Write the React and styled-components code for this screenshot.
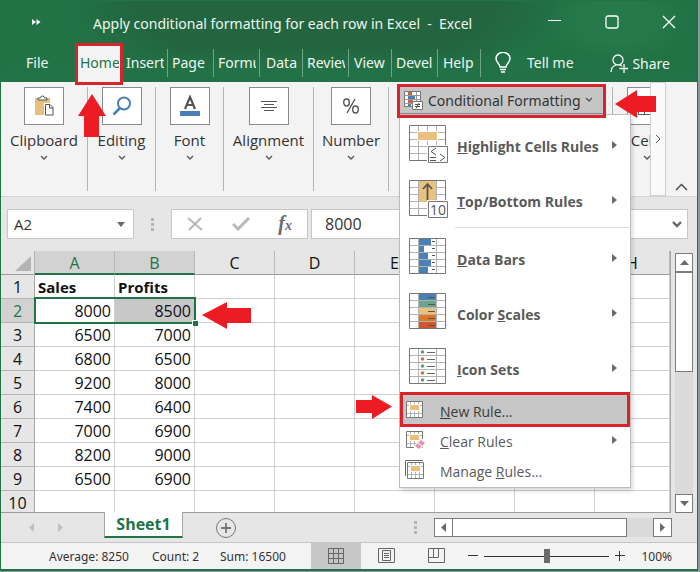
import React from "react";
import styled, { createGlobalStyle, css } from "styled-components";

const RED = "#d9242c";
const ARROW = "#ed1c24";
const GREEN = "#217346";

const GlobalStyle = createGlobalStyle`
  *, *::before, *::after { box-sizing: border-box; }
  body { margin: 0; background: #8d9a9f; font-family: "Noto Sans", "Open Sans", sans-serif; }
  button, input { font: inherit; color: inherit; background: none; border: 0; padding: 0; margin: 0; }
  svg { display: block; flex: none; }
`;

const Window = styled.main`
  position: relative;
  margin-right: 2px;
  border: 1px solid ${GREEN};
  border-bottom-width: 2px;
  background: #e6e6e6;
  color: #333;
  font-size: 14px;
`;

/* ---------- header ---------- */

const Header = styled.header`
  background:
    radial-gradient(ellipse 30px 18px at 855px 46px, #1f6640 80%, transparent),
    radial-gradient(ellipse 70px 40px at 617px 20px, #26794a 50%, transparent),
    radial-gradient(ellipse 420px 50px at 330px 96px, #237247 60%, transparent 100%),
    radial-gradient(ellipse 250px 80px at 315px 10px, #23653f 70%, transparent),
    ${GREEN};
  color: #eef6f0;
`;

const TitleBar = styled.div`
  display: flex;
  align-items: center;
  height: 42px;
  padding-left: 31px;
`;

const TitleText = styled.h1`
  flex: 1;
  margin: 4px 0 0 52px;
  font-size: 14px;
  line-height: 20px;
  font-weight: 400;
  white-space: pre;
`;

const WindowButton = styled.button`
  display: grid;
  place-items: center;
  width: 57px;
  height: 36px;
`;

const TabBar = styled.nav`
  display: flex;
  height: 39px;
`;

const Tab = styled.button`
  position: relative;
  display: flex;
  align-items: center;
  width: ${(p) => p.$width}px;
  padding: 0 4px 1px ${(p) => p.$pad ?? 4}px;
  text-align: left;
  ${(p) => p.$active && css`background: #f3f3f3; color: ${GREEN};`}
  ${(p) => p.$divided && css`
    &::after {
      content: "";
      position: absolute;
      right: 0;
      top: 6px;
      bottom: 5px;
      width: 1px;
      background: #6fa486;
    }
  `}
`;

const Clip = styled.span`
  flex: 1;
  overflow: hidden;
  white-space: nowrap;
`;

const TabAction = styled.button`
  display: flex;
  align-items: center;
  gap: ${(p) => p.$gap}px;
  padding: ${(p) => p.$top ?? 0}px 0 0 14px;
  margin-left: ${(p) => (p.$end ? "auto" : 0)};
  margin-right: ${(p) => (p.$end ? 27 : 0)}px;
  white-space: nowrap;
`;

const Frame = styled.span`
  position: absolute;
  z-index: 4;
  inset: ${(p) => p.$inset};
  border: 3px solid ${RED};
  pointer-events: none;
`;

/* ---------- ribbon ---------- */

const Ribbon = styled.section`
  display: flex;
  align-items: flex-start;
  height: 115px;
  background: #f3f3f3;
  border-bottom: 1px solid #d2d2d2;
`;

const Group = styled.button`
  display: flex;
  flex-direction: column;
  align-items: center;
  flex: none;
  width: ${(p) => p.$width}px;
  height: 104px;
  margin-top: 5px;
  border-right: ${(p) => (p.$open ? 0 : 1)}px solid #b4b4b4;
  font-family: "Open Sans", sans-serif;
  font-size: 15px;
  line-height: 20px;
  white-space: nowrap;
`;

const GroupIcon = styled.span`
  display: grid;
  place-items: center;
  width: 40px;
  height: 38px;
  margin-bottom: 5px;
  border: 1px solid #8a8a8a;
  background: #fff;
`;

const StyleGroup = styled.div`
  flex: 1;
  height: 104px;
  margin-top: 5px;
  padding-left: 11px;
  border-right: 1px solid #b4b4b4;
`;

const MenuAnchor = styled.div`
  position: relative;
  width: 205px;
`;

const CfButton = styled.button`
  display: flex;
  align-items: center;
  width: 205px;
  height: 27px;
  padding: 0 0 0 4px;
  gap: 4px;
  background: #c5c5c5;
  border-bottom: 1px solid #888;
  white-space: nowrap;
`;

const CellsClip = styled.div`
  width: 37px;
  padding-left: 14px;
  overflow: hidden;
`;

const ScrollRight = styled.button`
  display: grid;
  place-items: center;
  width: 16px;
  height: 114px;
  border: 1px solid #d0d0d0;
  background: #fafafa;
`;

const Collapse = styled.button`
  align-self: flex-end;
  width: 31px;
  display: grid;
  place-items: center;
  height: 18px;
`;

/* ---------- menu ---------- */

const Menu = styled.div`
  position: absolute;
  z-index: 3;
  left: -1px;
  top: 27px;
  width: 232px;
  padding: 2px 0;
  border: 1px solid #bdbdbd;
  background: #fff;
  box-shadow: 2px 3px 4px rgba(0, 0, 0, 0.14);
  color: #5a5a5a;
`;

const BigItem = styled.button`
  display: flex;
  align-items: center;
  width: 100%;
  height: 55px;
  padding: 0 13px 0 9px;
  font-weight: 700;
  text-align: left;
`;

const BigLabel = styled.span`
  flex: 1;
  margin-left: 8px;
  padding-top: 4px;
  font-family: "Open Sans", sans-serif;
  white-space: nowrap;
`;

const SmallItem = styled.button`
  position: relative;
  display: flex;
  align-items: center;
  width: 100%;
  height: 30px;
  padding: 0 13px 0 5px;
  text-align: left;
  ${(p) => p.$active && css`background: #c6c6c6; color: #3a3a3a;`}
`;

const SmallLabel = styled.span`
  flex: 1;
  margin-left: 15px;
  padding-top: 2px;
  font-family: "Open Sans", sans-serif;
`;

const Rule = styled.hr`
  height: 1px;
  margin: 0 1px 2px 55px;
  border: 0;
  background: #dcdcdc;
`;

/* ---------- formula bar ---------- */

const FormulaBar = styled.div`
  display: flex;
  align-items: center;
  height: 54px;
  padding: 0 9px 0 6px;
  font-size: 16px;
`;

const NameBox = styled.div`
  display: flex;
  align-items: center;
  width: 127px;
  height: 30px;
  padding: 0 8px 0 6px;
  border: 1px solid #c6c6c6;
  background: #fff;
`;

const BareInput = styled.input`
  flex: 1;
  min-width: 0;
  width: 100%;
  outline: none;
  font-family: "Open Sans", sans-serif;
  font-size: ${(p) => p.$size ?? 16}px;
`;

const Grip = styled.span`
  width: 3px;
  height: 13px;
  margin: 0 17px;
  align-self: center;
  background: repeating-linear-gradient(#b4b4b4 0 3px, transparent 3px 5px);
`;

const FxBox = styled.div`
  display: flex;
  align-items: center;
  justify-content: space-between;
  width: 137px;
  height: 30px;
  padding: 0 15px;
  border: 1px solid #c6c6c6;
  background: #fff;
`;

const FxButton = styled.button`
  font-family: "Liberation Serif", serif;
  font-style: italic;
  font-weight: 700;
  font-size: 20px;
  line-height: 24px;
  color: #6a6a6a;
  small { font-size: 14px; }
`;

const ValueBox = styled.div`
  display: flex;
  align-items: center;
  flex: 1;
  height: 30px;
  margin-left: 3px;
  padding: 0 5px 0 13px;
  border: 1px solid #c6c6c6;
  background: #fff;
`;

/* ---------- grid ---------- */

const SheetArea = styled.section`
  display: flex;
  height: 262px;
`;

const GridClip = styled.div`
  flex: 1;
  overflow: hidden;
  border-right: 1px solid #a6a6a6;
  border-bottom: 1px solid #9c9c9c;
`;

const Grid = styled.table`
  width: 100%;
  table-layout: fixed;
  border-collapse: separate;
  border-spacing: 0;
  color: #111;
  font-family: "Open Sans", sans-serif;
  font-size: 16px;
  line-height: 20px;
`;

const ColHead = styled.th`
  width: ${(p) => (p.$wide ? "auto" : "80px")};
  height: 24px;
  padding: 1px 0 0;
  border-right: 1px solid #b8b8b8;
  border-bottom: 1px solid #9c9c9c;
  background: #e6e6e6;
  font-weight: 400;
  ${(p) => p.$active && css`
    background: #d2d2d2;
    color: ${GREEN};
    border-bottom: 2px solid ${GREEN};
  `}
`;

const Corner = styled.th`
  width: 34px;
  padding: 0 3px 3px 0;
  border-right: 1px solid #b0b0b0;
  border-bottom: 1px solid #9c9c9c;
  vertical-align: bottom;
  svg { margin-left: auto; }
`;

const RowHead = styled.th`
  height: 24px;
  padding: 1px 0 0;
  border-right: 1px solid #a6a6a6;
  border-bottom: 1px solid #b4b4b4;
  background: #e6e6e6;
  font-weight: 400;
  ${(p) => p.$active && css`background: #d2d2d2; color: ${GREEN};`}
`;

const Cell = styled.td`
  position: relative;
  height: 24px;
  padding: 1px 3px 0;
  border-right: 1px solid #d0d0d0;
  border-bottom: 1px solid #d0d0d0;
  background: ${(p) => (p.$shaded ? "#c8c8c8" : "#fff")};
  font-weight: ${(p) => (p.$bold ? 700 : 400)};
  font-size: ${(p) => (p.$bold ? 15 : 16)}px;
  text-align: ${(p) => (p.$bold ? "left" : "right")};
`;

const Selection = styled.span`
  position: absolute;
  z-index: 1;
  left: -1px;
  top: -2px;
  width: 162px;
  height: 27px;
  border: 2px solid ${GREEN};
  &::after {
    content: "";
    position: absolute;
    right: -4px;
    bottom: -4px;
    width: 6px;
    height: 6px;
    border: 1px solid #fff;
    border-width: 1px 0 0 1px;
    background: ${GREEN};
  }
`;

const ScrollColumn = styled.div`
  display: flex;
  flex-direction: column;
  width: 18px;
  margin: 2px 4px 0;
  background: #dadada;
`;

const ScrollButton = styled.button`
  display: grid;
  place-items: center;
  width: ${(p) => p.$size ?? 18}px;
  height: 19px;
  border: 1px solid #7c7c7c;
  background: #fff;
`;

const ThumbV = styled.div`
  height: 100px;
  margin-bottom: auto;
  border: 1px solid #7c7c7c;
  background: #fff;
`;

/* ---------- footer ---------- */

const SheetTabs = styled.div`
  display: flex;
  height: 30px;
  border-bottom: 1px solid #c6c6c6;
`;

const Nav = styled.div`
  display: flex;
  align-items: center;
  gap: 24px;
  width: 103px;
  padding-left: 28px;
`;

const SheetTab = styled.button`
  width: 79px;
  height: 26px;
  margin-top: -1px;
  border: 1px solid #a6a6a6;
  border-top: 0;
  border-bottom: 2px solid ${GREEN};
  background: #fff;
  color: ${GREEN};
  font-family: "Open Sans", sans-serif;
  font-size: 16px;
  font-weight: 700;
  line-height: 20px;
`;

const AddSheet = styled.button`
  margin-left: 33px;
  margin-right: auto;
`;

const ScrollRow = styled.div`
  display: flex;
  align-items: center;
  width: 238px;
  height: 19px;
  margin: 5px 25px 0 0;
  background: #dadada;
`;

const ThumbH = styled.div`
  width: 175px;
  height: 19px;
  margin: 0 auto 0 -1px;
  border: 1px solid #7c7c7c;
  background: #fff;
`;

const StatusBar = styled.footer`
  display: flex;
  align-items: center;
  height: 26px;
  padding-left: 48px;
  background: #f3f3f3;
  font-size: 12px;
  white-space: nowrap;
`;

const Stat = styled.span`
  width: ${(p) => p.$width}px;
`;

const ViewButton = styled.button`
  display: grid;
  place-items: center;
  width: 50px;
  height: 26px;
  background: ${(p) => (p.$active ? "#c6c6c6" : "transparent")};
`;

const Zoom = styled.div`
  display: flex;
  align-items: center;
  gap: 6px;
  margin: 0 25px 0 auto;
`;

const ZoomSlider = styled.input`
  appearance: none;
  width: 125px;
  height: 14px;
  background: linear-gradient(#333, #333) center / 100% 1px no-repeat;
  &::-webkit-slider-thumb {
    appearance: none;
    width: 6px;
    height: 14px;
    background: #6a6a6a;
  }
`;

const ZoomValue = styled.span`
  margin-left: 10px;
`;

const Pointer = styled.svg`
  position: absolute;
  z-index: 4;
  left: ${(p) => p.$x}px;
  top: ${(p) => p.$y}px;
`;

/* ---------- drawings ---------- */

const Chevron = () => (
  <svg width="8" height="6" viewBox="0 0 8 6" fill="none" stroke="#555" strokeWidth="1.3">
    <path d="M1 1l3 3 3-3" />
  </svg>
);

const GroupChevron = () => (
  <svg width="8" height="14" viewBox="0 -5 8 14" fill="none" stroke="#555" strokeWidth="1.3">
    <path d="M1 1l3 3 3-3" />
  </svg>
);

const Triangle = ({ dir = "down", color = "#6a6a6a", w = 8, h = 5 }) => {
  const shapes = {
    down: `M0 0H${w}L${w / 2} ${h}Z`,
    up: `M0 ${h}H${w}L${w / 2} 0Z`,
    right: `M0 0V${h}L${w} ${h / 2}Z`,
    left: `M${w} 0V${h}L0 ${h / 2}Z`,
  };
  return (
    <svg width={w} height={h} viewBox={`0 0 ${w} ${h}`}>
      <path d={shapes[dir]} fill={color} />
    </svg>
  );
};

const groupIcons = {
  clipboard: (
    <svg width="20" height="22" viewBox="0 0 20 22" fill="none">
      <path d="M1 3h15v17H1z" fill="#e8bf7c" />
      <path d="M4 5V3h2.500a2 2 0 014 0H13v2z" fill="#fff" stroke="#555" />
      <path d="M10 8h7l3 3v10H10z" fill="#fff" />
      <path d="M11.500 9.500h4.500l3 3V20h-7.500z" fill="#fff" stroke="#555" />
      <path d="M15.500 9.500v3.500h3.500" stroke="#555" />
    </svg>
  ),
  search: (
    <svg width="20" height="20" viewBox="0 0 20 20" fill="none" stroke="#4a7fb5" strokeWidth="2">
      <circle cx="12" cy="7.500" r="6" />
      <path d="M8 12l-6.500 6.500" strokeWidth="2.500" />
    </svg>
  ),
  font: (
    <svg width="22" height="22" viewBox="0 0 22 22">
      <path d="M6 14l5-12 5 12M8 10h6" fill="none" stroke="#555" strokeWidth="2.200" />
      <path d="M1 16h20v5H1z" fill="#4a7fb5" />
    </svg>
  ),
  align: (
    <svg width="18" height="14" viewBox="0 0 18 14" stroke="#555">
      <path d="M1 2.500h16M4 5.500h10M1 8.500h16M4 11.500h10" />
    </svg>
  ),
  percent: (
    <svg width="18" height="18" viewBox="0 0 18 18" fill="none" stroke="#555" strokeWidth="1.400">
      <ellipse cx="4.500" cy="5.500" rx="2.800" ry="3.500" />
      <ellipse cx="13.500" cy="12.500" rx="2.800" ry="3.500" />
      <path d="M13 2L5 16" />
    </svg>
  ),
  cells: (
    <svg width="20" height="20" viewBox="0 0 20 20" fill="none" stroke="#555">
      <path d="M1.500 1.500h17v17h-17zM1.500 7.500h17M1.500 12.500h17M7.500 1.500v17" />
    </svg>
  ),
};

const CfIcon = () => (
  <svg width="20" height="20" viewBox="0 0 20 20" fill="none">
    <path d="M.5 1.500h16v15H.5z" fill="#fff" stroke="#777" />
    <path d="M.5 5.500h16M.5 9.500h16M.5 13.500h16M4.500 1.500v15M12.500 1.500v15" stroke="#999" />
    <path d="M4 2h4v3H4zM4 10h5v3H4z" fill="#d2603a" />
    <path d="M4 6h7v3H4zM4 14h3v2H4z" fill="#4a7fb5" />
    <path d="M8.500 11.500h10v8h-10z" fill="#fff" stroke="#777" />
    <path d="M11 14.500h5M11 16.500h5M15 13l-3 5.500" stroke="#555" />
  </svg>
);

function BigIcon({ kind }) {
  const scale = ["#4a80b8", "#69a58c", "#e8c27c", "#e0761f", "#d4542f"];
  const bars = [12, 5, 9, 12, 9];
  const dots = ["#5f9e8a", "#d2703a", "#5f9e8a", "#d2703a", "#5f9e8a"];
  return (
    <svg width="40" height="40" viewBox="0 0 40 40" fill="none">
      <path d="M.5.5h36v35H.5z" fill="#fff" />
      <path d="M.5 7.500h36M.5 14.500h36M.5 21.500h36M.5 28.500h36M9.500 .5v35M27.500 .5v35" stroke="#b2b2b2" />
      {(kind === "highlight" || kind === "top") && <path d="M18.500 .5v35" stroke="#b2b2b2" />}
      {kind === "highlight" && <path d="M8 6h21v10H8z" fill="#fff" />}
      {kind === "highlight" && <path d="M9 7h19v8H9z" fill="#e8c27c" />}
      {kind === "top" && <path d="M10 1h17v21H10z" fill="#e8c27c" />}
      {kind === "top" && <path d="M18.500 20V5M14 9l4.500-5L23 9" stroke="#555" strokeWidth="1.800" />}
      {kind === "bars" && bars.map((w, i) => (
        <g key={i}>
          <path d={`M10 ${1 + i * 7}h${w}v6h-${w}z`} fill="#4a80b8" />
          <path d={`M23 ${3.5 + i * 7}h3`} stroke="#555" />
        </g>
      ))}
      {kind === "colors" && scale.map((c, i) => (
        <g key={i}>
          <path d={`M10 ${1 + i * 7}h17v6H10z`} fill={c} />
          <path d={`M19 ${4.5 + i * 7}h7`} stroke="#555" />
        </g>
      ))}
      {kind === "icons" && dots.map((c, i) => (
        <g key={i}>
          <circle cx="13.500" cy={4 + i * 7} r="1.800" fill={c} />
          <path d={`M18 ${4.5 + i * 7}h8`} stroke="#666" />
        </g>
      ))}
      <path d="M.5.5h36v35H.5z" stroke="#777" />
      {kind === "highlight" && (
        <g>
          <path d="M18 20h22v20H18z" fill="#fff" />
          <path d="M19.500 21.500h19v16h-19z" fill="#fff" stroke="#777" />
          <path d="M27 23l-5 3.500 5 3.500M21 32.500h6M21 35.500h6M31 29l5 3.500-5 3.500" stroke="#555" />
        </g>
      )}
      {kind === "top" && (
        <g>
          <path d="M18 20h22v20H18z" fill="#fff" />
          <path d="M19.500 21.500h19v16h-19z" fill="#fff" stroke="#777" />
          <text x="21" y="35" fontSize="14" fontWeight="400" fill="#555" fontFamily="Open Sans, sans-serif">10</text>
        </g>
      )}
    </svg>
  );
}

const SmallIcon = ({ kind }) => (
  <svg width="20" height="20" viewBox="0 0 20 20" fill="none">
    {kind === "manage" && <path d="M.5 16V.5H18" stroke="#666" />}
    <g transform={kind === "manage" ? "translate(2 2)" : "translate(1 1)"}>
      <path d="M.5.5h16v16H.5z" fill="#fff" stroke="#777" />
      <path d="M1 4.500h15M1 12.500h15M4.500 1v15M8.500 1v15M12.500 1v15" stroke="#b5b5b5" />
      <path d="M3 3h11v7H3z" fill="#fff" />
      <path d="M4 4h9v5H4z" fill="#e8bf7c" />
    </g>
    {kind === "clear" && (
      <g>
        <path d="M9 16l7-7h4v6l-6 5H9z" fill="#fff" />
        <path d="M10 16l6-6 4 3-6 6z" fill="#e493a8" />
        <path d="M13 13l4 3" stroke="#fff" />
      </g>
    )}
  </svg>
);

const arrowPaths = {
  up: [28, 43, "M14 0L28 22H21V43H6V22H0Z"],
  left: [49, 27, "M0 13L25 0V6H49V21H25V27Z"],
  leftShort: [41, 28, "M0 14L22 0V6H41V22H22V28Z"],
  right: [36, 24, "M36 11.500L16 0V5H0V18H16V24Z"],
};

const Arrow = ({ kind, x, y }) => {
  const [w, h, d] = arrowPaths[kind];
  return (
    <Pointer $x={x} $y={y} width={w} height={h} viewBox={`0 0 ${w} ${h}`} aria-hidden="true">
      <path d={d} fill={ARROW} />
    </Pointer>
  );
};

/* ---------- data ---------- */

const tabs = [
  ["Insert", 45, 3],
  ["Page", 46],
  ["Formulas", 46],
  ["Data", 43, 6],
  ["Review", 46],
  ["View", 43, 5],
  ["Devel", 46],
  ["Help", 43, 5],
];

const groups = [
  ["Clipboard", 87, "clipboard"],
  ["Editing", 68, "search"],
  ["Font", 68, "font"],
  ["Alignment", 90, "align"],
  ["Number", 75, "percent"],
];

const columns = ["A", "B", "C", "D", "E", "F", "G", "H"];

const rows = [
  ["Sales", "Profits"],
  [8000, 8500],
  [6500, 7000],
  [6800, 6500],
  [9200, 8000],
  [7400, 6400],
  [7000, 6900],
  [8200, 9000],
  [6500, 6900],
  [],
];

const BigRow = ({ kind, children }) => (
  <BigItem role="menuitem">
    <BigIcon kind={kind} />
    <BigLabel>{children}</BigLabel>
    <Triangle dir="right" w={5} h={8} />
  </BigItem>
);

function ConditionalMenu() {
  return (
    <Menu role="menu" aria-label="Conditional Formatting">
      <BigRow kind="highlight"><u>H</u>ighlight Cells Rules</BigRow>
      <BigRow kind="top"><u>T</u>op/Bottom Rules</BigRow>
      <Rule />
      <BigRow kind="bars"><u>D</u>ata Bars</BigRow>
      <BigRow kind="colors">Color <u>S</u>cales</BigRow>
      <BigRow kind="icons"><u>I</u>con Sets</BigRow>
      <SmallItem role="menuitem" $active>
        <SmallIcon kind="new" />
        <SmallLabel><u>N</u>ew Rule...</SmallLabel>
        <Frame $inset="-3px 0 -2px 0" />
      </SmallItem>
      <SmallItem role="menuitem">
        <SmallIcon kind="clear" />
        <SmallLabel><u>C</u>lear Rules</SmallLabel>
        <Triangle dir="right" w={5} h={8} />
      </SmallItem>
      <SmallItem role="menuitem">
        <SmallIcon kind="manage" />
        <SmallLabel>Manage <u>R</u>ules...</SmallLabel>
      </SmallItem>
    </Menu>
  );
}

export default function App() {
  return (
    <>
      <GlobalStyle />
      <Window>
        <Header>
          <TitleBar>
            <svg width="9" height="6" viewBox="0 0 9 6" fill="#fff"><path d="M0 0l4 3-4 3zM4.500 0l4 3-4 3z" /></svg>
            <TitleText>{"Apply conditional formatting for each row in Excel  -  Excel"}</TitleText>
            <WindowButton aria-label="Minimize">
              <svg width="13" height="13" stroke="#fff"><path d="M0 4.500h13" /></svg>
            </WindowButton>
            <WindowButton aria-label="Maximize">
              <svg width="14" height="14" fill="none" stroke="#fff" strokeWidth="1.300"><rect x="1" y="1" width="12" height="12" rx="2" /></svg>
            </WindowButton>
            <WindowButton aria-label="Close">
              <svg width="14" height="14" stroke="#fff" strokeWidth="1.300"><path d="M1 1l12 12M13 1L1 13" /></svg>
            </WindowButton>
          </TitleBar>
          <TabBar>
            <Tab $width={74} $pad={25}>File</Tab>
            <Tab $width={48} $pad={5} $active>
              <Clip>Home</Clip>
              <Frame $inset="0 0 -3px 0" />
            </Tab>
            {tabs.map(([name, width, pad]) => (
              <Tab key={name} $width={width} $pad={pad} $divided><Clip>{name}</Clip></Tab>
            ))}
            <TabAction $gap={16}>
              <svg width="16" height="21" viewBox="0 0 16 21" fill="none" stroke="#fff" strokeWidth="1.500">
                <path d="M5 15c0-3-4-4.500-4-8.500a7 6.200 0 0114 0C15 10.500 11 12 11 15zM5 17.500h6M6 20h4" />
              </svg>
              Tell me
            </TabAction>
            <TabAction $gap={4} $end $top={2}>
              <svg width="18" height="19" viewBox="0 0 18 19" fill="none" stroke="#fff" strokeWidth="1.300">
                <circle cx="8" cy="6" r="5" />
                <path d="M1 18c0-4 2-6 5-7M10 11l2 1M14 10v9M9.500 14.500H18" />
              </svg>
              Share
            </TabAction>
          </TabBar>
        </Header>

        <Ribbon>
          {groups.map(([name, width, icon]) => (
            <Group key={name} $width={width}>
              <GroupIcon>{groupIcons[icon]}</GroupIcon>
              {name}
              <GroupChevron />
            </Group>
          ))}
          <StyleGroup>
            <MenuAnchor>
              <CfButton aria-haspopup="menu" aria-expanded="true">
                <CfIcon />
                Conditional Formatting
                <Chevron />
              </CfButton>
              <ConditionalMenu />
              <Frame $inset="-3px -1px -4px -3px" />
            </MenuAnchor>
          </StyleGroup>
          <CellsClip>
            <Group $width={40} $open>
              <GroupIcon>{groupIcons.cells}</GroupIcon>
              Cells
              <GroupChevron />
            </Group>
          </CellsClip>
          <ScrollRight aria-label="More commands">
            <svg width="6" height="10" fill="none" stroke="#555"><path d="M1 1l4 4-4 4" /></svg>
          </ScrollRight>
          <Collapse aria-label="Collapse ribbon">
            <svg width="13" height="8" fill="none" stroke="#444" strokeWidth="1.400"><path d="M1 7l5.500-5.500L12 7" /></svg>
          </Collapse>
        </Ribbon>

        <FormulaBar>
          <NameBox>
            <BareInput aria-label="Name box" $size={15} defaultValue="A2" />
            <Triangle />
          </NameBox>
          <Grip />
          <FxBox>
            <svg width="16" height="14" stroke="#b9b9b9" strokeWidth="2.200"><path d="M1 1l14 12M14 1L2 13" /></svg>
            <svg width="18" height="14" fill="none" stroke="#b9b9b9" strokeWidth="3"><path d="M1 7l5 5L17 1" /></svg>
            <FxButton>f<small>x</small></FxButton>
          </FxBox>
          <ValueBox>
            <BareInput aria-label="Formula" defaultValue="8000" />
            <svg width="10" height="7" fill="none" stroke="#666" strokeWidth="2.400"><path d="M1 1l4 4 4-4" /></svg>
          </ValueBox>
        </FormulaBar>

        <SheetArea>
          <GridClip>
            <Grid>
              <thead>
                <tr>
                  <Corner><svg width="16" height="15"><path d="M16 0v15H0z" fill="#b4b4b4" /></svg></Corner>
                  {columns.map((c, i) => (
                    <ColHead key={c} $active={i < 2} $wide={c === "H"}>{c}</ColHead>
                  ))}
                </tr>
              </thead>
              <tbody>
                {rows.map((r, ri) => (
                  <tr key={ri}>
                    <RowHead $active={ri === 1}>{ri + 1}</RowHead>
                    {columns.map((c, ci) => (
                      <Cell key={c} $bold={ri === 0} $shaded={ri === 1 && ci === 1}>
                        {r[ci]}
                        {ri === 1 && ci === 0 && <Selection />}
                      </Cell>
                    ))}
                  </tr>
                ))}
              </tbody>
            </Grid>
          </GridClip>
          <ScrollColumn>
            <ScrollButton aria-label="Scroll up"><Triangle dir="up" w={9} /></ScrollButton>
            <ThumbV />
            <ScrollButton aria-label="Scroll down"><Triangle w={9} /></ScrollButton>
          </ScrollColumn>
        </SheetArea>

        <SheetTabs>
          <Nav>
            <Triangle dir="left" color="#c0c0c0" w={5} h={9} />
            <Triangle dir="right" color="#c0c0c0" w={5} h={9} />
          </Nav>
          <SheetTab>Sheet1</SheetTab>
          <AddSheet aria-label="New sheet">
            <svg width="20" height="20" fill="none" stroke="#777"><circle cx="10" cy="10" r="9.500" /><path d="M10 5v10M5 10h10" strokeWidth="1.800" /></svg>
          </AddSheet>
          <Grip />
          <ScrollRow>
            <ScrollButton $size={19} aria-label="Scroll left"><Triangle dir="left" w={5} h={9} /></ScrollButton>
            <ThumbH />
            <ScrollButton $size={19} aria-label="Scroll right"><Triangle dir="right" w={5} h={9} /></ScrollButton>
          </ScrollRow>
        </SheetTabs>

        <StatusBar>
          <Stat $width={103}>Average: 8250</Stat>
          <Stat $width={68}>Count: 2</Stat>
          <Stat $width={91}>Sum: 16500</Stat>
          <ViewButton aria-label="Normal view" $active>
            <svg width="17" height="17" fill="none" stroke="#666"><path d="M.5.5h15v15H.5zM.5 5.500h15M.5 10.500h15M5.500 .5v15M10.500 .5v15" /></svg>
          </ViewButton>
          <ViewButton aria-label="Page layout view">
            <svg width="17" height="16" fill="none" stroke="#666"><path d="M.5.5h16v14H.5zM4.500 2.500h8v10h-8zM6 5.500h5M6 7.500h5M6 9.500h5" /></svg>
          </ViewButton>
          <ViewButton aria-label="Page break view">
            <svg width="17" height="16" fill="none" stroke="#666"><path d="M.5.5h16v14H.5zM.5 9.500h10V.5M5.500 .5v9" /></svg>
          </ViewButton>
          <Zoom>
            <button aria-label="Zoom out"><svg width="10" height="10" stroke="#333"><path d="M0 4.500h10" /></svg></button>
            <ZoomSlider type="range" min="0" max="200" defaultValue="100" aria-label="Zoom" />
            <button aria-label="Zoom in"><svg width="10" height="10" stroke="#333"><path d="M0 4.500h10M4.500 0v10" /></svg></button>
            <ZoomValue>100%</ZoomValue>
          </Zoom>
        </StatusBar>

        <Arrow kind="up" x={77} y={93} />
        <Arrow kind="leftShort" x={614} y={89} />
        <Arrow kind="left" x={201} y={301} />
        <Arrow kind="right" x={355} y={394} />
      </Window>
    </>
  );
}
